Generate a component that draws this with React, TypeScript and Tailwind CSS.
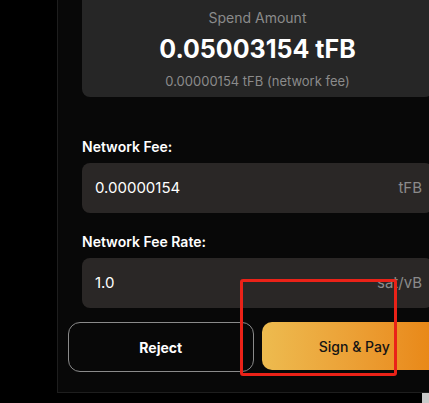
import React from "react";

export default function App() {
  return (
    <div
      className="relative h-[403px] w-[429px] overflow-hidden bg-black"
      style={{ fontFamily: "Inter, 'Noto Sans', sans-serif" }}
    >
      <div className="ml-[57px] w-[400px] border-b border-l border-[#1e1e1e] bg-[#080808] pb-[20px]">
        <div className="px-[24px]">
          <div className="flex h-[97px] flex-col items-center rounded-b-[8px] bg-[#262626] pt-[8px]">
            <div className="text-[14px] leading-[20px] text-[#8b8b8b]">Spend Amount</div>
            <div className="mt-[4px] text-[25px] font-bold leading-[34px] text-white">0.05003154 tFB</div>
            <div className="mt-[7px] text-[13px] leading-[16px] text-[#8b8b8b]">0.00000154 tFB (network fee)</div>
          </div>

          <div className="mt-[40px] text-[14px] font-semibold leading-[20px] text-white">Network Fee:</div>
          <div className="mt-[6px] flex h-[50px] items-center justify-between rounded-[8px] bg-[#2a2726] pl-[13px] pr-[11px] text-[15px]">
            <span className="text-white">0.00000154</span>
            <span className="text-[#8b8b8b]">tFB</span>
          </div>

          <div className="mt-[19px] text-[14px] font-semibold leading-[20px] text-white">Network Fee Rate:</div>
          <div className="mt-[6px] flex h-[50px] items-center justify-between rounded-[8px] bg-[#2a2726] pl-[13px] pr-[11px] text-[15px]">
            <span className="text-white">1.0</span>
            <span className="text-[#8b8b8b]">sat/vB</span>
          </div>
        </div>

        <div className="mt-[14px] flex gap-[8px] px-[10px]">
          <button className="flex h-[50px] w-[186px] items-center justify-center rounded-[12px] border border-[#8a8a8a] text-[14px] font-bold text-white">
            Reject
          </button>
          <button className="flex h-[48px] w-[186px] items-center justify-center rounded-[10px] bg-gradient-to-r from-[#edbb4f] to-[#e8830c] text-[14px] font-medium text-[#141414]">
            Sign &amp; Pay
          </button>
        </div>
      </div>

      <div className="absolute left-[240px] top-[279px] h-[97px] w-[157px] rounded-[3px] border-[3px] border-[#ea2218]" />
      <div className="absolute left-[422px] top-[393px] h-[10px] w-[7px] bg-[#c9c9c9]" />
    </div>
  );
}
